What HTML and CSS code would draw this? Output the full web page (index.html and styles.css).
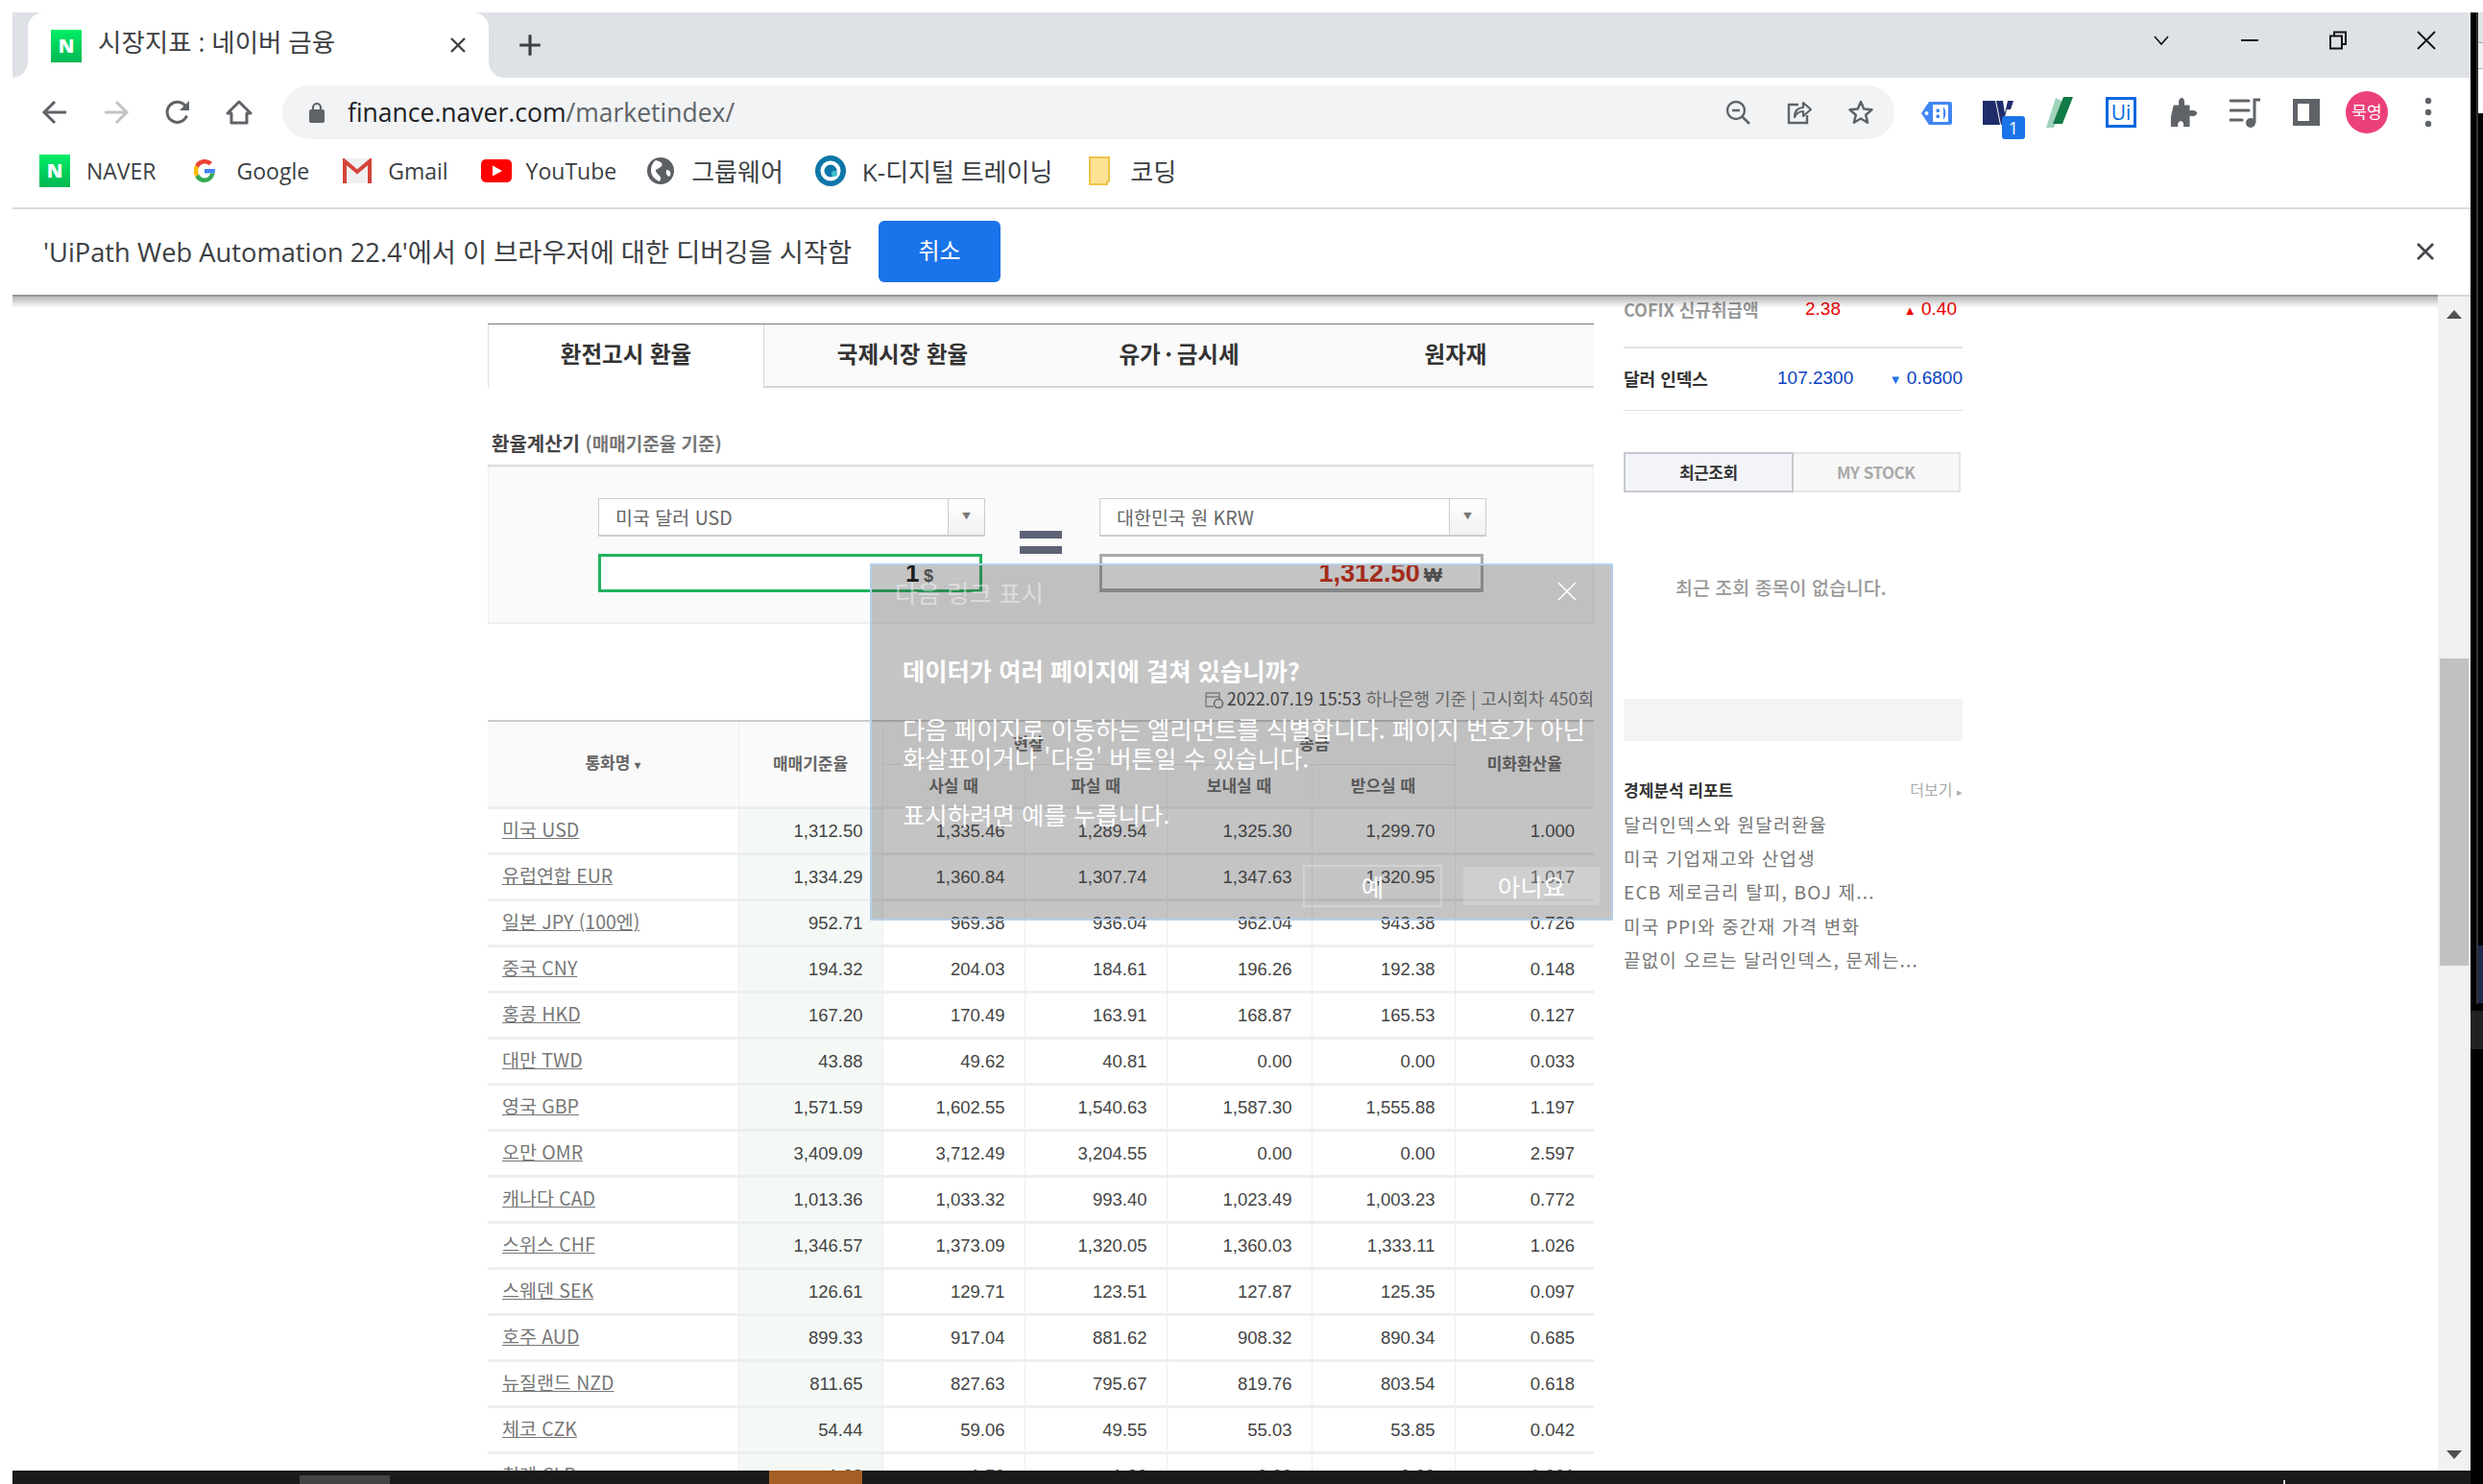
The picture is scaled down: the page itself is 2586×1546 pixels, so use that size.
FILE: index.html
```html
<!DOCTYPE html>
<html lang="ko">
<head>
    <meta charset="UTF-8">
    <title>시장지표 : 네이버 금융</title>
    <link rel="stylesheet" href="styles.css">
</head>
<body>
<div class="window">
    <!-- tab strip -->
    <div class="tabStrip">
        <div class="browserTab">
            <svg class="favicon" viewBox="0 0 32 34"><defs><linearGradient id="nv" x1="0" y1="0" x2="0" y2="1"><stop offset="0" stop-color="#00ee66"/><stop offset="1" stop-color="#02b653"/></linearGradient></defs><rect width="32" height="34" fill="url(#nv)"/><text x="16" y="24" text-anchor="middle" class="nLetter">N</text></svg>
            <span class="tabTitle">시장지표 : 네이버 금융</span>
            <svg class="tabClose" viewBox="0 0 16 16"><path d="M1 1 15 15M15 1 1 15" stroke="#3c4043" stroke-width="2.4"/></svg>
        </div>
        <svg class="newTab" viewBox="0 0 20 20"><path d="M10 1V19M1 10H19" stroke="#3c4043" stroke-width="2.6"/></svg>
        <div class="winControls">
            <svg viewBox="0 0 24 24"><path d="M5 8 12 16 19 8" fill="none" stroke="#111" stroke-width="1.6"/></svg>
            <svg viewBox="0 0 24 24"><path d="M3 12H21" stroke="#111" stroke-width="2"/></svg>
            <svg viewBox="0 0 24 24"><path d="M4 7.5H16V20.5H4ZM8 7V3.5H20V16H16" fill="none" stroke="#111" stroke-width="2"/></svg>
            <svg viewBox="0 0 24 24"><path d="M3 3 21 21M21 3 3 21" stroke="#111" stroke-width="1.8"/></svg>
        </div>
    </div>

    <!-- toolbar -->
    <div class="toolbar">
        <svg class="navIcon" viewBox="0 0 28 28"><path d="M26 14H4M14 3 3 14 14 25" fill="none" stroke="#5f6368" stroke-width="3"/></svg>
        <svg class="navIcon" viewBox="0 0 28 28"><path d="M2 14H24M14 3 25 14 14 25" fill="none" stroke="#c1c3c6" stroke-width="3"/></svg>
        <svg class="navIcon" viewBox="0 0 28 28"><path d="M23.5 17.5A10.5 10.5 0 1 1 22 7.5" fill="none" stroke="#5f6368" stroke-width="3"/><path d="M26 2V12H16Z" fill="#5f6368"/></svg>
        <svg class="navIcon" viewBox="0 0 28 28"><path d="M14 3 26 15H22V25H6V15H2Z" fill="none" stroke="#5f6368" stroke-width="3" stroke-linejoin="round"/></svg>
        <div class="urlBar">
            <svg class="lock" viewBox="0 0 16 22"><path d="M4 9V6A4 4 0 0 1 12 6V9" fill="none" stroke="#5f6368" stroke-width="2.2"/><rect y="8" width="16" height="14" rx="2" fill="#5f6368"/></svg>
            <span class="urlText">finance.naver.com<span class="urlPath">/marketindex/</span></span>
            <svg class="urlIcon" viewBox="0 0 28 28"><circle cx="12" cy="12" r="9" fill="none" stroke="#5f6368" stroke-width="2.4"/><path d="M8 12H16M18.5 18.5 26 26" stroke="#5f6368" stroke-width="2.6"/></svg>
            <svg class="urlIcon" viewBox="0 0 28 28"><path d="M13 6H3V25H22V17" fill="none" stroke="#5f6368" stroke-width="2.4"/><path d="M9 19C9 12 13 9 18 9V4L26 11 18 18V13C14 13 11 15 9 19Z" fill="none" stroke="#5f6368" stroke-width="2.2" stroke-linejoin="round"/></svg>
            <svg class="urlIcon" viewBox="0 0 28 28"><path d="M14 3 17.2 10.6 25.5 11.3 19.2 16.7 21.1 24.8 14 20.5 6.9 24.8 8.8 16.7 2.5 11.3 10.8 10.6Z" fill="none" stroke="#5f6368" stroke-width="2.5" stroke-linejoin="round"/></svg>
        </div>
        <div class="extensions">
            <svg class="extTag" viewBox="0 0 32 26"><path d="M8 1H30A2 2 0 0 1 32 3V23A2 2 0 0 1 30 25H8L0 13Z" fill="#4285f4"/><rect x="12" y="4" width="16" height="18" fill="#fff"/><circle cx="5.500" cy="13" r="2" fill="#fff"/><path d="M16 9H18.500V11.500H16ZM16 15H18.500V17.500H16ZM23 7C25.500 10 25.500 16 23 19" fill="#4285f4" stroke="#4285f4" stroke-width="1"/></svg>
            <div class="extWrap">
                <svg class="extW" viewBox="0 0 32 25"><path d="M0 0H13L18 25H0Z" fill="#1f2d6b"/><path d="M14 0H21L23 13 26 0H32L29 9H25L21 25H19Z" fill="#1f2d6b"/></svg>
                <span class="extBadge">1</span>
            </div>
            <svg class="extSlash" viewBox="0 0 28 32"><path d="M10 1 0 32H8L18 5Z" fill="#9fd3bb"/><path d="M18 0H28L17 28H7Z" fill="#127a45"/></svg>
            <div class="extUi"><span>Ui</span></div>
            <svg class="extPuzzle" viewBox="0 0 30 32"><path d="M4 8H10C9 2 11 0 13 0S17 2 16 8H22V14C28 13 30 15 30 17S28 21 22 20V32H15C16 28 14 26 12 26S8 28 9 32H1V21Z" fill="#5f6368"/></svg>
            <svg class="extMusic" viewBox="0 0 32 32"><path d="M1 4H20M1 14H20M1 24H13" stroke="#5f6368" stroke-width="3.2" stroke-linecap="round"/><path d="M26 27V3H32" fill="none" stroke="#5f6368" stroke-width="3"/><circle cx="22" cy="27" r="5" fill="#5f6368"/></svg>
            <div class="extPanel"></div>
            <div class="avatar">묵영</div>
            <svg class="extDots" viewBox="0 0 8 32"><circle cx="4" cy="4" r="3.200" fill="#5f6368"/><circle cx="4" cy="16" r="3.200" fill="#5f6368"/><circle cx="4" cy="28" r="3.200" fill="#5f6368"/></svg>
        </div>
    </div>

    <!-- bookmarks -->
    <div class="bookmarks">
        <a class="bm bmNaver"><svg viewBox="0 0 32 34"><rect width="32" height="34" fill="url(#nv)"/><text x="16" y="24" text-anchor="middle" class="nLetter">N</text></svg>NAVER</a>
        <a class="bm bmGoogle"><svg viewBox="0 0 24 24"><path d="M12 10V14.500H22.700C23 13 23 11 22.800 10Z" fill="#4285f4"/><path d="M22.700 14.500C21.500 20 17 24 12 24 8 24 4.300 21.800 2.300 18.200L6 15.300C7 17.800 9.300 19.500 12 19.500 15 19.500 17.500 17.500 18.100 14.500Z" fill="#34a853"/><path d="M2.300 18.200C.3 14.500.3 9.500 2.300 5.800L6 8.700C5 11 5 13 6 15.300Z" fill="#fbbc05"/><path d="M2.300 5.800C4.300 2.200 8 0 12 0 15 0 17.800 1.100 20 3.100L16.800 6.300C15.500 5.100 13.800 4.500 12 4.500 9.300 4.500 7 6.200 6 8.700Z" fill="#ea4335"/></svg>Google</a>
        <a class="bm bmGmail"><svg viewBox="0 0 30 26"><rect width="30" height="26" fill="#f0f0f0"/><path d="M2 26V3L15 14 28 3V26" fill="none" stroke="#d4433a" stroke-width="4"/></svg>Gmail</a>
        <a class="bm bmYoutube"><svg viewBox="0 0 32 24"><rect width="32" height="24" rx="5" fill="#f00"/><path d="M12 6.500 22 12 12 17.500Z" fill="#fff"/></svg>YouTube</a>
        <a class="bm bmGroup"><svg viewBox="0 0 28 28"><circle cx="14" cy="14" r="14" fill="#5c5f63"/><path d="M9 3C14 4 18 7 14 10S7 12 10 16 16 20 13 25C8 23 4 19 4 14S6 5 9 3ZM20 13C24 13 25 16 24 19 22 21 19 18 20 13Z" fill="#fff"/></svg>그룹웨어</a>
        <a class="bm bmDigital"><svg viewBox="0 0 32 32"><circle cx="16" cy="16" r="16" fill="#0f76a8"/><circle cx="16" cy="16" r="8.500" fill="none" stroke="#fff" stroke-width="4"/><circle cx="20" cy="19" r="3" fill="#3cc0c7"/></svg>K-디지털 트레이닝</a>
        <a class="bm bmFolder"><svg viewBox="0 0 23 30"><path d="M1 1H21V26H19V29H1Z" fill="#fde293" stroke="#eec249" stroke-width="2"/></svg>코딩</a>
    </div>

    <!-- debug infobar -->
    <div class="infobar">
        <span class="infoText">'UiPath Web Automation 22.4'에서 이 브라우저에 대한 디버깅을 시작함</span>
        <button class="cancelBtn">취소</button>
        <svg class="infoClose" viewBox="0 0 20 20"><path d="M2 2 18 18M18 2 2 18" stroke="#44474b" stroke-width="2.8"/></svg>
    </div>

    <!-- page -->
    <div class="viewport">
        <div class="page">
            <div class="mainCol">
                <ul class="marketTabs">
                    <li class="on">환전고시 환율</li>
                    <li>국제시장 환율</li>
                    <li>유가&thinsp;·&thinsp;금시세</li>
                    <li>원자재</li>
                </ul>
                <h3 class="calcTitle">환율계산기 <em>(매매기준율 기준)</em></h3>
                <div class="calcBox">
                    <div class="calcCol">
                        <div class="selectBox"><span>미국 달러 USD</span><i>▼</i></div>
                        <div class="amountBox amountFocus"><b>1</b> <small>$</small></div>
                    </div>
                    <div class="equalSign"></div>
                    <div class="calcCol">
                        <div class="selectBox"><span>대한민국 원 KRW</span><i>▼</i></div>
                        <div class="amountBox amountResult"><b>1,312.50</b> <small>₩</small></div>
                    </div>
                </div>
                <p class="dateLine"><svg class="dateIcon" viewBox="0 0 20 20"><path d="M1 3H15V9M1 3V17H9M1 7H15" fill="none" stroke="#999" stroke-width="1.500"/><circle cx="14" cy="14" r="4.500" fill="none" stroke="#777" stroke-width="1.500"/></svg><b>2022.07.19 15:53</b> 하나은행 기준 | 고시회차 450회</p>
                <table class="rateTable">
                    <colgroup>
                        <col class="colName"><col class="colBase"><col class="colCash"><col class="colCash"><col class="colSend"><col class="colRecv"><col class="colUsd">
                    </colgroup>
                    <thead>
                        <tr>
                            <th rowspan="2">통화명 <small>▾</small></th>
                            <th rowspan="2">매매기준율</th>
                            <th colspan="2" class="group">현찰</th>
                            <th colspan="2" class="group">송금</th>
                            <th rowspan="2">미화환산율</th>
                        </tr>
                        <tr>
                            <th>사실 때</th><th>파실 때</th><th>보내실 때</th><th>받으실 때</th>
                        </tr>
                    </thead>
                    <tbody>
                        <tr><td><a>미국 USD</a></td><td>1,312.50</td><td>1,335.46</td><td>1,289.54</td><td>1,325.30</td><td>1,299.70</td><td>1.000</td></tr>
                        <tr><td><a>유럽연합 EUR</a></td><td>1,334.29</td><td>1,360.84</td><td>1,307.74</td><td>1,347.63</td><td>1,320.95</td><td>1.017</td></tr>
                        <tr><td><a>일본 JPY (100엔)</a></td><td>952.71</td><td>969.38</td><td>936.04</td><td>962.04</td><td>943.38</td><td>0.726</td></tr>
                        <tr><td><a>중국 CNY</a></td><td>194.32</td><td>204.03</td><td>184.61</td><td>196.26</td><td>192.38</td><td>0.148</td></tr>
                        <tr><td><a>홍콩 HKD</a></td><td>167.20</td><td>170.49</td><td>163.91</td><td>168.87</td><td>165.53</td><td>0.127</td></tr>
                        <tr><td><a>대만 TWD</a></td><td>43.88</td><td>49.62</td><td>40.81</td><td>0.00</td><td>0.00</td><td>0.033</td></tr>
                        <tr><td><a>영국 GBP</a></td><td>1,571.59</td><td>1,602.55</td><td>1,540.63</td><td>1,587.30</td><td>1,555.88</td><td>1.197</td></tr>
                        <tr><td><a>오만 OMR</a></td><td>3,409.09</td><td>3,712.49</td><td>3,204.55</td><td>0.00</td><td>0.00</td><td>2.597</td></tr>
                        <tr><td><a>캐나다 CAD</a></td><td>1,013.36</td><td>1,033.32</td><td>993.40</td><td>1,023.49</td><td>1,003.23</td><td>0.772</td></tr>
                        <tr><td><a>스위스 CHF</a></td><td>1,346.57</td><td>1,373.09</td><td>1,320.05</td><td>1,360.03</td><td>1,333.11</td><td>1.026</td></tr>
                        <tr><td><a>스웨덴 SEK</a></td><td>126.61</td><td>129.71</td><td>123.51</td><td>127.87</td><td>125.35</td><td>0.097</td></tr>
                        <tr><td><a>호주 AUD</a></td><td>899.33</td><td>917.04</td><td>881.62</td><td>908.32</td><td>890.34</td><td>0.685</td></tr>
                        <tr><td><a>뉴질랜드 NZD</a></td><td>811.65</td><td>827.63</td><td>795.67</td><td>819.76</td><td>803.54</td><td>0.618</td></tr>
                        <tr><td><a>체코 CZK</a></td><td>54.44</td><td>59.06</td><td>49.55</td><td>55.03</td><td>53.85</td><td>0.042</td></tr>
                        <tr><td><a>칠레 CLP</a></td><td>1.38</td><td>1.50</td><td>1.26</td><td>0.00</td><td>0.00</td><td>0.001</td></tr>
                    </tbody>
                </table>
            </div>

            <div class="sideCol">
                <div class="indexRow indexCofix"><span class="indexName">COFIX 신규취급액</span><span class="indexVal">2.38</span><span class="indexDiff"><i>▲</i> 0.40</span></div>
                <div class="indexRow indexDollar"><span class="indexName">달러 인덱스</span><span class="indexVal">107.2300</span><span class="indexDiff"><i>▼</i> 0.6800</span></div>
                <div class="stockTabs"><span class="on">최근조회</span><span>MY STOCK</span></div>
                <p class="emptyMsg">최근 조회 종목이 없습니다.</p>
                <div class="sideBanner"></div>
                <div class="reportHead"><b>경제분석 리포트</b><span>더보기 <small>▸</small></span></div>
                <ul class="reportList">
                    <li>달러인덱스와 원달러환율</li>
                    <li>미국 기업재고와 산업생</li>
                    <li>ECB 제로금리 탈피, BOJ 제...</li>
                    <li>미국 PPI와 중간재 가격 변화</li>
                    <li>끝없이 오르는 달러인덱스, 문제는...</li>
                </ul>
            </div>

            <!-- highlight dialog drawn over the page -->
            <div class="dialog">
                <div class="dialogHead"><span>다음 링크 표시</span><svg viewBox="0 0 20 20"><path d="M1 1 19 19M19 1 1 19" stroke="#fff" stroke-width="1.600"/></svg></div>
                <h4>데이터가 여러 페이지에 걸쳐 있습니까?</h4>
                <p>다음 페이지로 이동하는 엘리먼트를 식별합니다. 페이지 번호가 아닌<br>화살표이거나 '다음' 버튼일 수 있습니다.</p>
                <p>표시하려면 예를 누릅니다.</p>
                <div class="dialogBtns"><span class="yesBtn">예</span><span class="noBtn">아니요</span></div>
            </div>
        </div>
        <div class="scrollbar">
            <span class="arrowUp"></span>
            <span class="thumb"></span>
            <span class="arrowDown"></span>
        </div>
    </div>

    <!-- desktop edge below the window -->
    <div class="taskStrip"><span class="stripGrey"></span><span class="stripBrown"></span><span class="stripTick"></span></div>
</div>
<div class="edgeStrip">
    <span class="edgeLine"></span>
    <span class="edgeWindow"></span>
    <span class="edgeNavy"></span>
    <span class="edgeBand"></span>
</div>
</body>
</html>
```
FILE: styles.css
```css
* {
    box-sizing: border-box;
}

html, body {
    margin: 0;
    height: 100%;
    overflow: hidden;
    background: #fff;
}

body {
    display: flex;
    font-family: "Open Sans", "Noto Sans CJK KR", sans-serif;
    color: #3c4043;
}

.window {
    flex: 1;
    min-width: 0;
    margin-left: 13px;
    padding-top: 13px;
    display: flex;
    flex-direction: column;
    height: 1546px;
}

/* sliver of the next window at the right edge */
.edgeStrip {
    position: relative;
    width: 13px;
    margin-top: 13px;
    background: #000;
}

.edgeLine {
    position: absolute;
    left: 6px;
    top: 0;
    width: 2px;
    height: 1033px;
    background: #333;
}

.edgeWindow {
    position: absolute;
    left: 8px;
    right: 0;
    top: 0;
    height: 105px;
    background: linear-gradient(#dee1e6 0 31px, #aaa 31px 32px, #f1f1f1 32px 58px, #aaa 58px 59px, #fff 59px);
}

.edgeNavy {
    position: absolute;
    left: 8px;
    right: 0;
    top: 972px;
    height: 60px;
    background: #1f2a4e;
}

.edgeBand {
    position: absolute;
    left: 0;
    right: 0;
    top: 1040px;
    height: 40px;
    background: #222;
}

/* tab strip */
.tabStrip {
    height: 68px;
    background: #dee1e6;
    display: flex;
    align-items: center;
    flex-shrink: 0;
}

.browserTab {
    position: relative;
    margin-left: 16px;
    width: 480px;
    height: 68px;
    background: #fff;
    border-radius: 16px 16px 0 0;
    display: flex;
    align-items: center;
    padding-left: 24px;
}

.browserTab::before,
.browserTab::after {
    content: "";
    position: absolute;
    bottom: 0;
    width: 16px;
    height: 16px;
}

.browserTab::before {
    left: -16px;
    background: radial-gradient(circle at 0 0, #dee1e6 15.5px, #fff 16px);
}

.browserTab::after {
    right: -16px;
    background: radial-gradient(circle at 100% 0, #dee1e6 15.5px, #fff 16px);
}

.favicon {
    width: 32px;
    height: 34px;
    margin-top: 2px;
}

.nLetter {
    font: 800 20px "Open Sans", sans-serif;
    fill: #fff;
}

.tabTitle {
    margin-left: 17px;
    font-size: 26.5px;
    line-height: 30px;
    margin-top: -6px;
    color: #3c4043;
}

.tabClose {
    position: absolute;
    left: 440px;
    top: 26px;
    width: 16px;
    height: 16px;
}

.newTab {
    width: 24px;
    height: 24px;
    margin-left: 31px;
}

.winControls {
    margin-left: auto;
    padding-right: 34px;
    margin-top: -10px;
    display: flex;
    gap: 68px;
}

.winControls svg {
    width: 24px;
    height: 24px;
}

/* toolbar */
.toolbar {
    height: 72px;
    padding: 8px 0 0 30px;
    display: flex;
    align-items: flex-start;
    flex-shrink: 0;
}

.navIcon {
    width: 28px;
    height: 28px;
    margin-top: 14px;
    margin-right: 36px;
}

.urlBar {
    position: relative;
    width: 1679px;
    height: 56px;
    margin-left: -5px;
    border-radius: 28px;
    background: #f1f3f4;
    display: flex;
    align-items: center;
    padding-left: 28px;
}

.lock {
    width: 16px;
    height: 22px;
}

.urlText {
    margin-left: 24px;
    font-size: 26.5px;
    color: #202124;
}

.urlPath {
    color: #5f6368;
}

.urlIcon {
    width: 28px;
    height: 28px;
    margin-left: 36px;
}

.urlText + .urlIcon {
    margin-left: auto;
}

.urlBar .urlIcon:last-child {
    margin-right: 21px;
}

.extensions {
    position: relative;
    flex: 1;
    height: 72px;
    display: flex;
    align-items: flex-start;
}

.extTag {
    width: 32px;
    height: 26px;
    margin: 16px 0 0 28px;
}

.extWrap {
    position: relative;
    margin: 16px 0 0 32px;
    width: 32px;
    height: 25px;
}

.extW {
    width: 32px;
    height: 25px;
    display: block;
}

.extBadge {
    position: absolute;
    left: 20px;
    top: 16px;
    width: 24px;
    height: 24px;
    border-radius: 3px;
    background: #1a73e8;
    color: #fff;
    font-size: 18px;
    line-height: 24px;
    text-align: center;
}

.extSlash {
    width: 28px;
    height: 32px;
    margin: 12px 0 0 34px;
}

.extUi {
    width: 32px;
    height: 32px;
    margin: 12px 0 0 34px;
    border: 3px solid #0067df;
    background: #fff;
    color: #0067df;
    font: 21px/26px "Open Sans", sans-serif;
    text-align: center;
}

.extPuzzle {
    width: 28px;
    height: 32px;
    margin: 12px 0 0 35px;
}

.extMusic {
    width: 32px;
    height: 32px;
    margin: 12px 0 0 34px;
}

.extPanel {
    width: 28px;
    height: 28px;
    margin: 14px 0 0 34px;
    border: solid #5f6368;
    border-width: 5px 11px 5px 5px;
    background: #fff;
}

.avatar {
    width: 44px;
    height: 44px;
    margin: 6px 0 0 27px;
    border-radius: 50%;
    background: #ec407a;
    color: #fff;
    font-size: 17px;
    line-height: 44px;
    text-align: center;
}

.extDots {
    width: 8px;
    height: 32px;
    margin: 12px 0 0 38px;
}

/* bookmarks */
.bookmarks {
    height: 65px;
    padding: 8px 0 0 28px;
    display: flex;
    flex-shrink: 0;
    border-bottom: 2px solid #dadce0;
    align-items: flex-start;
}

.bm {
    display: flex;
    align-items: center;
    height: 34px;
    font-size: 23px;
    color: #3c4043;
    white-space: nowrap;
}

.bm svg {
    flex-shrink: 0;
}

.bmNaver svg { width: 32px; height: 34px; margin-right: 17px; }
.bmGoogle { margin-left: 38px; }
.bmGoogle svg { width: 24px; height: 24px; margin-right: 22px; }
.bmGmail { margin-left: 35px; }
.bmGmail svg { width: 30px; height: 26px; margin-right: 17px; }
.bmYoutube { margin-left: 34px; }
.bmYoutube svg { width: 32px; height: 24px; margin-right: 15px; }
.bmGroup { margin-left: 32px; font-size: 26px; }
.bmGroup svg { width: 28px; height: 28px; margin-right: 18px; }
.bmDigital { margin-left: 33px; font-size: 26px; }
.bmDigital svg { width: 32px; height: 32px; margin-right: 17px; }
.bmFolder { margin-left: 38px; font-size: 26px; }
.bmFolder svg { width: 23px; height: 30px; margin-right: 20px; }

/* infobar */
.infobar {
    position: relative;
    z-index: 2;
    height: 91px;
    background: #fff;
    border-bottom: 2px solid #d5d7da;
    display: flex;
    align-items: center;
    flex-shrink: 0;
    padding: 0 0 2px 32px;
}

.infobar::after {
    content: "";
    position: absolute;
    left: 0;
    right: 34px;
    top: 100%;
    height: 14px;
    background: linear-gradient(rgba(0, 0, 0, .32), rgba(0, 0, 0, 0));
}

.infoText {
    font-size: 27.3px;
    color: #3c4043;
    width: 870px;
    margin-top: -2px;
    white-space: nowrap;
}

.cancelBtn {
    width: 127px;
    height: 64px;
    border: 0;
    border-radius: 6px;
    background: #1a73e8;
    color: #fff;
    font: 24px "Noto Sans CJK KR", sans-serif;
    padding-bottom: 6px;
}

.infoClose {
    width: 20px;
    height: 20px;
    margin-left: auto;
    margin-right: 37px;
}

/* page */
.viewport {
    flex: 1;
    min-height: 0;
    display: flex;
    background: #fff;
}

.page {
    position: relative;
    flex: 1;
    min-width: 0;
    overflow: hidden;
    display: flex;
    align-items: flex-start;
    padding-left: 495px;
    font-family: "Liberation Sans", "Noto Sans CJK KR", sans-serif;
    color: #333;
}

.mainCol {
    width: 1152px;
    padding-top: 28px;
}

.marketTabs {
    list-style: none;
    margin: 0;
    padding: 0;
    display: flex;
    height: 67px;
    border-top: 1px solid #767a88;
}

.marketTabs li {
    width: 288px;
    text-align: center;
    background: #fafafa;
    border-bottom: 2px solid #d6d6d6;
    font: 700 23.5px/60px "Noto Sans CJK KR", sans-serif;
    color: #333;
}

.marketTabs li.on {
    background: #fff;
    border-bottom: 0;
    border-left: 1px solid #e0e0e0;
    border-right: 1px solid #d6d6d6;
}

.calcTitle {
    margin: 0;
    height: 82px;
    padding: 45px 0 0 4px;
    font: 700 20px/26px "Noto Sans CJK KR", sans-serif;
    color: #444;
    border-bottom: 2px solid #dedede;
}

.calcTitle em {
    font-style: normal;
    color: #777;
    font-size: 19px;
}

.calcBox {
    height: 164px;
    background: #fafafa;
    border: solid #eee;
    border-width: 1px 1px 2px;
    display: flex;
    padding: 32px 0 0 114px;
}

.calcCol {
    width: 403px;
}

.selectBox {
    height: 40px;
    background: #fff;
    border: 1px solid #ccc;
    border-bottom-width: 2px;
    display: flex;
    align-items: center;
    font: 19.5px "Noto Sans CJK KR", sans-serif;
    color: #666;
    padding-left: 17px;
    position: relative;
}

.selectBox i {
    position: absolute;
    right: 0;
    top: 0;
    bottom: 0;
    width: 38px;
    border-left: 1px solid #ccc;
    background: linear-gradient(#fff, #f1f1f1);
    font-style: normal;
    font-size: 9px;
    line-height: 36px;
    text-align: center;
    color: #777;
}

.amountBox {
    width: 400px;
    height: 40px;
    margin-top: 18px;
    background: #fff;
    border: 3px solid #21b35f;
    text-align: right;
    padding-right: 48px;
    line-height: 34px;
}

.amountFocus b {
    font-size: 26px;
    color: #111;
}

.amountFocus small {
    font-size: 18px;
    font-weight: 700;
    color: #555;
}

.amountResult {
    border-color: #aaa;
    padding-right: 40px;
    border-bottom-width: 4px;
}

.amountResult b {
    font-size: 27px;
    color: #d0240c;
}

.amountResult small {
    font-size: 20px;
    font-weight: 700;
    color: #555;
}

.equalSign {
    width: 44px;
    height: 24px;
    margin: 34px 39px 0 36px;
    border: solid #5d6375;
    border-width: 8px 0;
    flex-shrink: 0;
}

.dateLine {
    margin: 0;
    height: 100px;
    padding-top: 65px;
    text-align: right;
    font: 18px/24px "Noto Sans CJK KR", sans-serif;
    color: #777;
}

.dateLine b {
    font-weight: 400;
    color: #444;
}

.dateIcon {
    width: 20px;
    height: 20px;
    margin-right: 3px;
    vertical-align: -4px;
}

.rateTable {
    width: 1152px;
    table-layout: fixed;
    border-collapse: collapse;
    border-top: 2px solid #ccc;
}

.colName { width: 261px; }
.colBase { width: 150px; }
.colCash { width: 148px; }
.colSend { width: 151px; }
.colRecv { width: 149px; }
.colUsd { width: 145px; }

.rateTable th {
    background: #fafafa;
    font: 700 17px/20px "Noto Sans CJK KR", sans-serif;
    color: #666;
    height: 45px;
    border-left: 1px solid #eee;
    padding: 0;
}

.rateTable th:first-child {
    border-left: 0;
}

.rateTable th[rowspan] {
    padding-bottom: 2px;
}

.rateTable thead tr:last-child th:first-child {
    border-left: 1px solid #eee;
}

.rateTable th.group {
    border-bottom: 1px solid #e8e8e8;
    padding-left: 8px;
}

.rateTable thead {
    border-bottom: 3px solid #eee;
}

.rateTable th small {
    font-size: 12px;
}

.rateTable td {
    height: 48px;
    padding: 1px 20px 0 0;
    border-left: 1px solid #eee;
    border-bottom: 3px solid #eee;
    text-align: right;
    font: 18.5px "Liberation Sans", sans-serif;
    color: #444;
}

.rateTable td:first-child {
    border-left: 0;
    text-align: left;
    padding: 0 0 4px 15px;
    font: 19.5px "Noto Sans CJK KR", "Liberation Sans", sans-serif;
    color: #777;
}

.rateTable td:first-child a {
    text-decoration: underline;
}

.rateTable td:nth-child(2) {
    background: #f4f9f6;
}

/* right column */
.sideCol {
    width: 353px;
    margin-left: 31px;
}

.indexRow {
    display: flex;
    align-items: center;
    font: 19px "Liberation Sans", "Noto Sans CJK KR", sans-serif;
}

.indexCofix {
    height: 54px;
    border-bottom: 2px solid #e4e4e4;
    padding: 0 6px 26px 0;
    color: #e00;
}

.indexDollar {
    height: 65px;
    border-bottom: 1px solid #e2e2e2;
    padding-bottom: 2px;
    color: #0a3fc0;
}

.indexName {
    font: 700 18px "Noto Sans CJK KR", sans-serif;
    width: 160px;
    white-space: nowrap;
}

.indexCofix .indexName {
    color: #999;
    width: 189px;
}

.indexDollar .indexName {
    color: #333;
}

.indexDiff {
    margin-left: auto;
    white-space: nowrap;
}

.indexDiff i {
    font-style: normal;
    font-size: 13px;
}

.indexDollar .indexDiff i {
    color: #1a73e8;
}

.stockTabs {
    margin-top: 43px;
    display: flex;
    width: 351px;
    height: 42px;
    font: 700 17px/38px "Noto Sans CJK KR", sans-serif;
    text-align: center;
}

.stockTabs span {
    flex: 1;
    background: #f7f7f7;
    border: 2px solid #e6e6e6;
    border-left: 0;
    color: #aaa;
    letter-spacing: -.5px;
}

.stockTabs span.on {
    background: #f3f4f8;
    border: 2px solid #c5c8d0;
    color: #333;
}

.emptyMsg {
    margin: 0;
    height: 215px;
    padding: 85px 0 0 54px;
    font: 500 19.5px/28px "Noto Sans CJK KR", sans-serif;
    color: #999;
}

.sideBanner {
    height: 44px;
    background: #f4f4f4;
}

.reportHead {
    margin-top: 37px;
    height: 26px;
    display: flex;
    justify-content: space-between;
    align-items: center;
    font: 17px "Noto Sans CJK KR", sans-serif;
    color: #aaa;
}

.reportHead b {
    color: #333;
}

.reportHead span {
    font-size: 16px;
}

.reportHead small {
    font-size: 11px;
}

.reportList {
    list-style: none;
    margin: 6px 0 0;
    padding: 0;
    font: 19px/35.200px "Noto Sans CJK KR", sans-serif;
    letter-spacing: 1.2px;
    color: #777;
}

/* dialog */
.dialog {
    position: absolute;
    left: 893px;
    top: 278px;
    width: 774px;
    height: 372px;
    background: rgba(60, 60, 60, .3);
    border: 2px solid #b6cfe8;
    padding: 0 18px 0 32px;
    color: #fff;
    font-family: "Noto Sans CJK KR", sans-serif;
}

.dialogHead {
    height: 54px;
    display: flex;
    align-items: center;
    justify-content: space-between;
    margin-left: -8px;
    font-size: 25.5px;
}

.dialogHead span {
    opacity: .45;
}

.dialogHead svg {
    width: 20px;
    height: 20px;
    margin-right: 18px;
}

.dialog h4 {
    margin: 0;
    padding-top: 35px;
    font-size: 25.3px;
    font-weight: 700;
    line-height: 40px;
}

.dialog p {
    margin: 0;
    font-size: 25.4px;
    line-height: 30px;
    white-space: nowrap;
}

.dialog h4 + p {
    margin-top: 26px;
}

.dialog p + p {
    margin-top: 29px;
}

.dialogBtns {
    position: absolute;
    left: 449px;
    top: 312px;
    display: flex;
    gap: 22px;
    font-size: 25.5px;
    text-align: center;
}

.yesBtn {
    width: 145px;
    height: 44px;
    border: 2px solid rgba(255, 255, 255, .25);
    line-height: 40px;
}

.noBtn {
    width: 142px;
    height: 40px;
    margin-top: 2px;
    background: rgba(255, 255, 255, .2);
    line-height: 40px;
}

/* scrollbar */
.scrollbar {
    position: relative;
    width: 34px;
    background: #f1f1f1;
    flex-shrink: 0;
}

.arrowUp,
.arrowDown {
    position: absolute;
    left: 9px;
    width: 0;
    height: 0;
    border-left: 8px solid transparent;
    border-right: 8px solid transparent;
}

.arrowUp {
    top: 14px;
    border-bottom: 9px solid #505050;
}

.arrowDown {
    bottom: 12px;
    border-top: 9px solid #505050;
}

.thumb {
    position: absolute;
    left: 2px;
    right: 2px;
    top: 377px;
    height: 320px;
    background: #c1c1c1;
}

/* desktop strip */
.taskStrip {
    position: relative;
    height: 14px;
    background: #1b1b1b;
    flex-shrink: 0;
}

.stripGrey {
    position: absolute;
    left: 299px;
    top: 5px;
    width: 94px;
    height: 9px;
    background: #444;
}

.stripBrown {
    position: absolute;
    left: 788px;
    top: 0;
    width: 97px;
    height: 14px;
    background: #a55f25;
}

.stripTick {
    position: absolute;
    left: 2365px;
    top: 10px;
    width: 2px;
    height: 4px;
    background: #ddd;
}
```
